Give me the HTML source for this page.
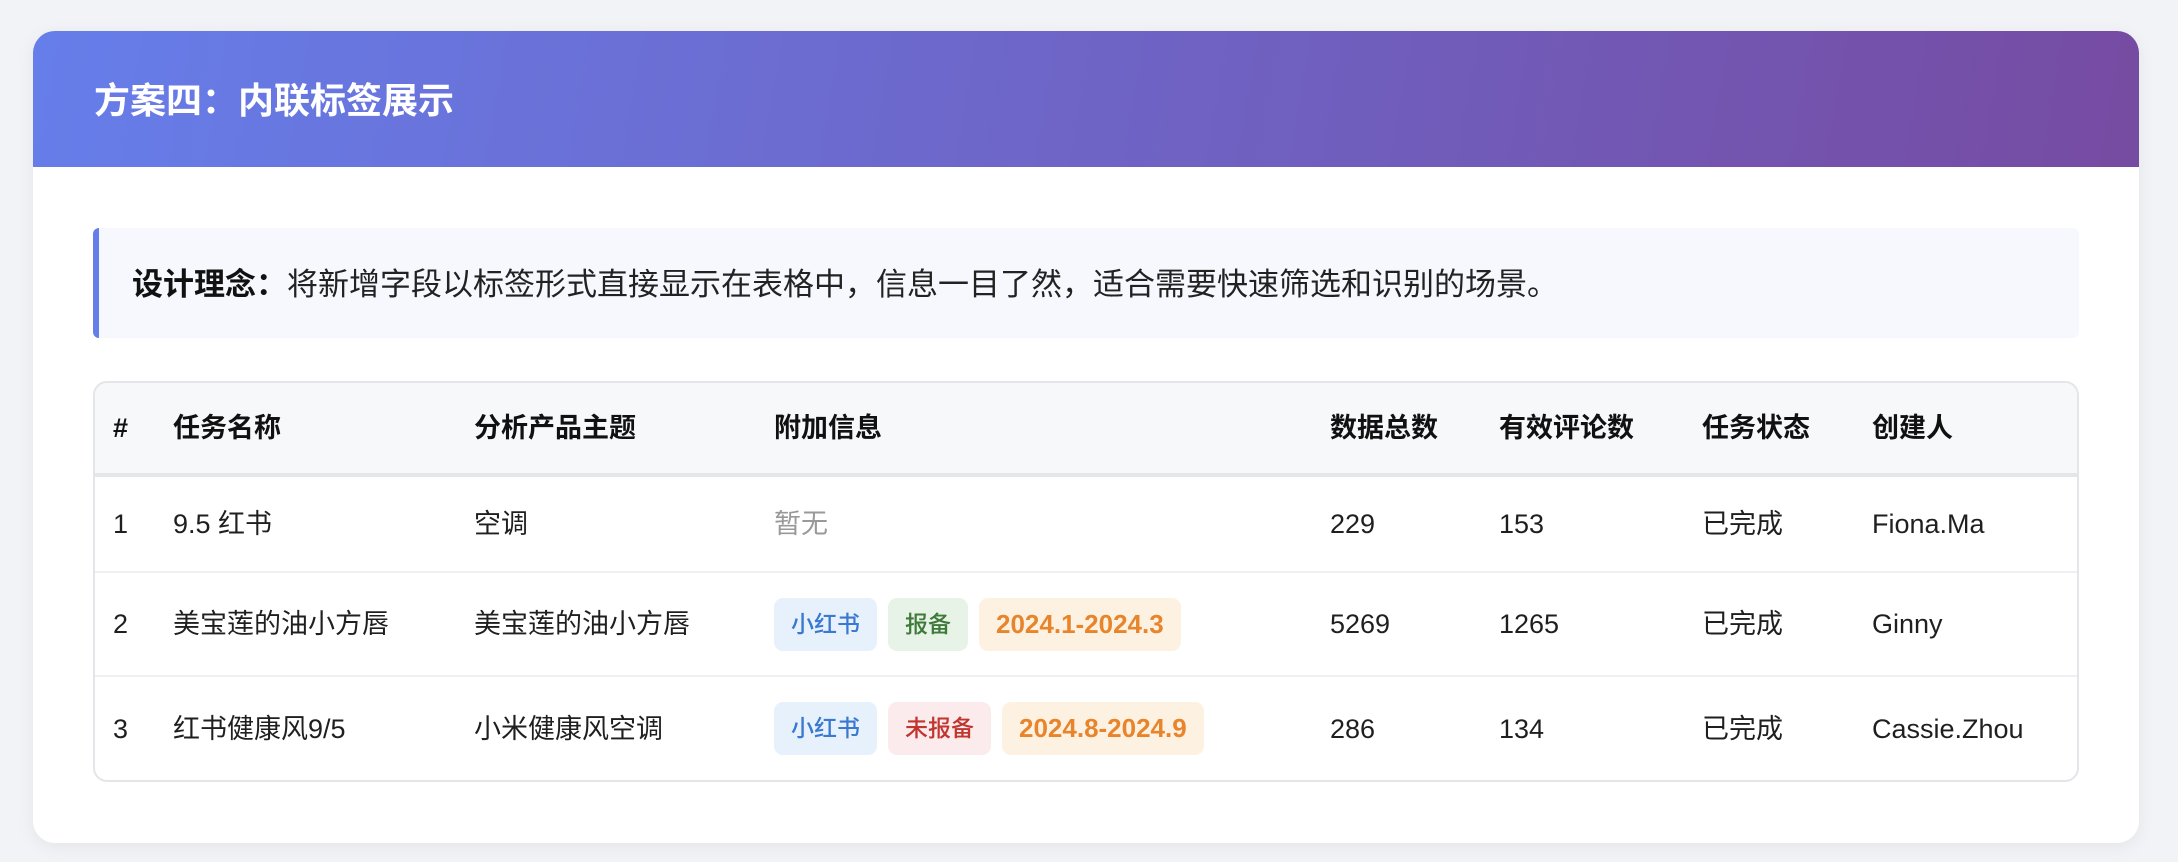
<!DOCTYPE html>
<html><head><meta charset="utf-8"><style>
*{box-sizing:border-box;margin:0;padding:0}
body{width:2178px;height:862px;background:#f2f3f6;font-family:"Liberation Sans","Noto Sans CJK SC",sans-serif;color:#1f1f1f;position:relative;overflow:hidden}
.card{position:absolute;left:33px;top:31px;width:2106px;height:812px;background:#fff;border-radius:22px;overflow:hidden;box-shadow:0 4px 18px rgba(0,0,0,0.06)}
.hd{height:136px;background:linear-gradient(100deg,#667eea 0%,#764ba2 100%);padding-left:61px;padding-top:4px;display:flex;align-items:center;color:#fff;font-size:36px;font-weight:bold;line-height:40px}
.desc{position:absolute;left:60px;top:197px;width:1986px;height:110px;background:#f7f8fd;border-left:6px solid #667eea;border-radius:6px;padding-left:33px;padding-top:4px;display:flex;align-items:center;font-size:31px;line-height:36px;color:#222}
.desc b{font-weight:bold;color:#111}
.tw{position:absolute;left:60px;top:350px;width:1986px;height:401px;border:2px solid #e3e5e9;border-radius:14px;overflow:hidden}
table{border-collapse:collapse;table-layout:fixed;width:100%}
th,td{text-align:left;padding-left:18px;font-size:27px;line-height:32px;white-space:nowrap;vertical-align:middle}
th{height:92px;background:#f7f8fa;font-weight:bold;color:#111;border-bottom:4px solid #e3e6ea}
td{color:#1f1f1f;border-bottom:2px solid #eeeff2}
tr.r1 td{height:97px}tr.r2 td{height:104px}tr.r3 td{height:104px;border-bottom:none}
.g{color:#999}
.t{display:inline-block;height:53px;line-height:53px;padding:0 17px;border-radius:9px;font-size:23px;margin-right:11px;vertical-align:middle;font-weight:500}
.b{background:#e6f1fc;color:#3b78cf}.gr{background:#e8f3e8;color:#3e7a3a}.rd{background:#fcebed;color:#c0362e}.o{background:#fdf2e2;color:#e8852c;font-weight:bold;font-size:26px}
</style></head><body>
<div class="card">
<div class="hd">方案四：内联标签展示</div>
<div class="desc"><span><b>设计理念：</b>将新增字段以标签形式直接显示在表格中，信息一目了然，适合需要快速筛选和识别的场景。</span></div>
<div class="tw"><table>
<colgroup><col style="width:60px"><col style="width:301px"><col style="width:300px"><col style="width:556px"><col style="width:169px"><col style="width:203px"><col style="width:170px"><col></colgroup>
<tr><th>#</th><th>任务名称</th><th>分析产品主题</th><th>附加信息</th><th>数据总数</th><th>有效评论数</th><th>任务状态</th><th>创建人</th></tr>
<tr class="r1"><td>1</td><td>9.5 红书</td><td>空调</td><td class="g">暂无</td><td>229</td><td>153</td><td>已完成</td><td>Fiona.Ma</td></tr>
<tr class="r2"><td>2</td><td>美宝莲的油小方唇</td><td>美宝莲的油小方唇</td><td><span class="t b">小红书</span><span class="t gr">报备</span><span class="t o">2024.1-2024.3</span></td><td>5269</td><td>1265</td><td>已完成</td><td>Ginny</td></tr>
<tr class="r3"><td>3</td><td>红书健康风9/5</td><td>小米健康风空调</td><td><span class="t b">小红书</span><span class="t rd">未报备</span><span class="t o">2024.8-2024.9</span></td><td>286</td><td>134</td><td>已完成</td><td>Cassie.Zhou</td></tr>
</table></div>
</div>
</body></html>
